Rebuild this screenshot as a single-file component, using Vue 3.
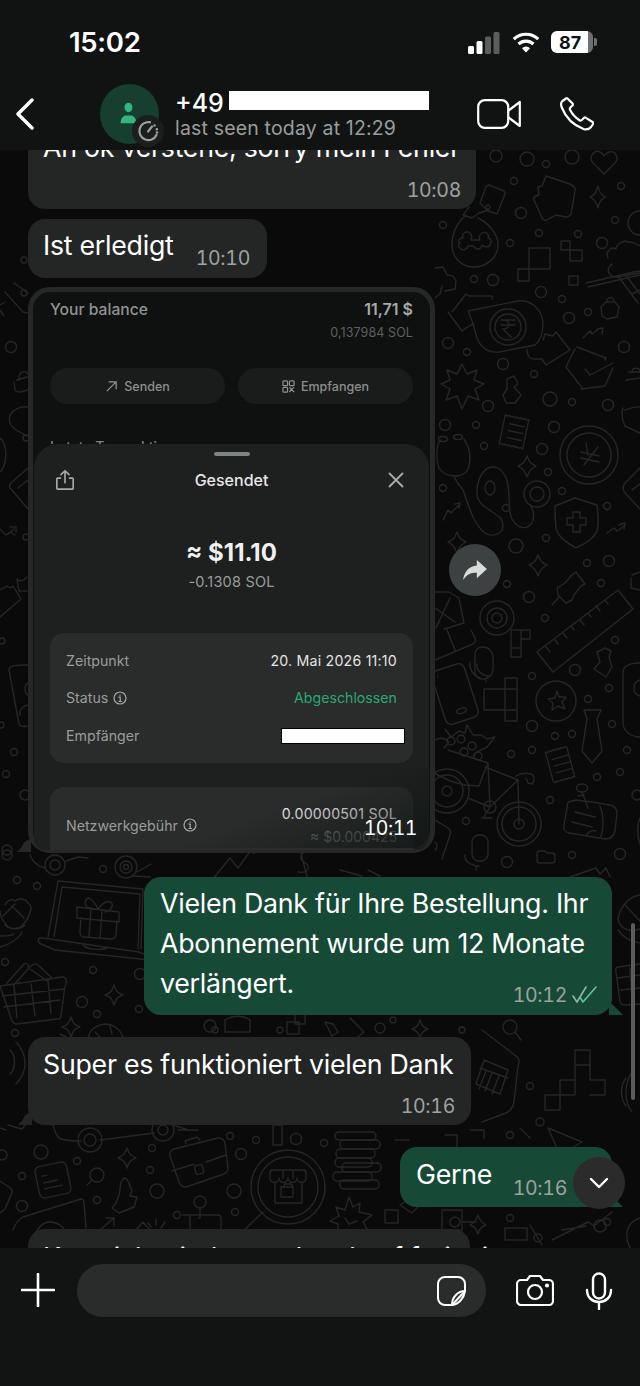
<template>
  <div class="phone">
    <header class="topbar">
      <div class="status">
        <span class="clock">15:02</span>
        <div class="status-icons">
          <svg class="signal" viewBox="0 0 32 22"><rect x="0" y="14" width="6" height="8" rx="1.5" fill="#fff"/><rect x="8.5" y="9" width="6" height="13" rx="1.5" fill="#fff"/><rect x="17" y="4.500" width="6" height="17.500" rx="1.500" fill="#5b5d5d"/><rect x="25.500" y="0" width="6" height="22" rx="1.500" fill="#5b5d5d"/></svg>
          <svg class="wifi" viewBox="0 0 28 21" fill="none" stroke="#fff" stroke-width="3.200"><path d="M1.800 7.200a17.500 17.500 0 0 1 24.400 0"/><path d="M6.500 12a11 11 0 0 1 15 0"/><path d="M14 20.500l-4-4.300a5.600 5.600 0 0 1 8 0z" fill="#fff" stroke="none"/></svg>
          <div class="battery"><span>87</span><i></i></div>
        </div>
      </div>
      <div class="contact">
        <svg class="back" viewBox="0 0 22 32" fill="none" stroke="#fff" stroke-width="3.400" stroke-linecap="round" stroke-linejoin="round"><path d="M18 2L4 16l14 14"/></svg>
        <div class="avatar">
          <svg viewBox="0 0 24 30" fill="#36b37e"><ellipse cx="12" cy="8" rx="5" ry="6"/><path d="M2 28c0-6 3-9 6-10h8c3 1 6 4 6 10z"/></svg>
          <span class="timer">
            <svg viewBox="0 0 24 24" fill="none" stroke="#9aa09e" stroke-width="2.200" stroke-linecap="round"><path d="M14 3.200A9 9 0 1 0 20.500 16"/><path d="M12 12.500l4-5"/><path d="M18.500 6.500h.01M20.800 10.200h.01M21 13.500h.01" stroke-width="2.600"/></svg>
          </span>
        </div>
        <div class="who">
          <div class="name">+49<span class="redact"></span></div>
          <div class="seen">last seen today at 12:29</div>
        </div>
        <svg class="video" viewBox="0 0 44 30" fill="none" stroke="#fff" stroke-width="2.200" stroke-linejoin="round"><rect x="1.200" y="1.200" width="30" height="27.600" rx="6.500"/><path d="M31.500 11.500L42.800 3v24l-11.300-8.500"/></svg>
        <svg class="call" viewBox="0 0 34 34" fill="none" stroke="#fff" stroke-width="2.200" stroke-linejoin="round"><path d="M6 1.500L2.500 4C.8 5.500.8 8 1.800 10.500 5.500 20 13 28 23.500 32c2.500.8 5.500.5 7.500-2l2-3c.4-.8.2-1.500-.5-2l-6.500-4.200c-.8-.5-1.500-.4-2.200.2l-2 2c-.7.6-1.500.7-2.300.2-3.500-2.200-7.500-6.500-9.500-10.500-.4-.8-.2-1.500.4-2.200l2-2c.5-.6.6-1.300.2-2L8 2c-.5-.8-1.300-1-2-.5z"/></svg>
      </div>
    </header>

    <main class="chat">
      <!-- wallpaper coordinates are page coordinates -->
      <svg class="wallpaper" viewBox="0 150 640 1098" fill="none" stroke="#262626" stroke-width="1.400" stroke-linejoin="round" stroke-linecap="round">
        <circle v-for="(d, i) in dots" :key="i" :cx="d[0]" :cy="d[1]" :r="d[2]"/>

        <!-- top right -->
        <path d="M604 174l-11-11c-5-6 1-14 7-11 2 1 3 2 4 4 1-2 3-3 5-4 6-2 11 6 6 11z"/>
        <path d="M546 176l24 8c4 2 6 4 5 7l-4 23c-1 2-3 3-5 3l-10-2-9 5c-2 1-4 0-5-2l-8-18c-1-2 0-3 2-4l3-1-1-8 4-1z"/>
        <path d="M598 186c1 6 3 9 7 11-4 3-6 5-7 11-2-6-3-8-8-11 5-2 6-5 8-11z"/>
        <path d="M489 185l15 6c1 1 1 2 1 3l-8 20-9-3-8-8 6-16c1-2 2-2 3-2z"/>
        <path d="M469 207l-6 8 9 3 7-5 10-3M488 205a2 2 0 1 0 .1 0"/>
        <path d="M466 215c-8 7-14 17-14 30 0 13 10 22 22 22s24-9 24-22c0-12-10-22-20-27"/>
        <path d="M463 238c-2-5 4-8 7-5 2 2 2 5 1 7h9c-1-2-1-5 2-7 4-2 8 2 6 5 3 0 4 5 2 7-2 3-6 2-8 0-1 2-1 4-3 4-2 1-4-1-6-3h-5c-1 3-4 5-7 3-3-1-3-5-1-6-3-1-1-5 3-5z"/>
        <path d="M529 248h21v21h-21zM518 269h11v12h-11zM561 241h9v9h-9zM570 250h12v11h-12zM569 276h9v9h-9z"/>
        <path d="M608 258c-3-6 3-12 8-9 1-6 8-9 12-7 4-1 8 2 12 4M612 264c-4 2-5 8-2 10 1 2 4 3 7 3l23-4"/>
        <path d="M586 283l48-11 6-1M588 287l52-12M618 276l20 27M625 274l15 20M640 290l-8 4"/>
        <circle cx="640" cy="223" r="12"/>
        <path d="M606 302h9l4 5-2 10-10 2-5-3-1-9zM607 302c-1-6 8-6 7 0"/>
        <path d="M583 338l7-7 2 3 8-6M597 329l6-1-1 6"/>
        <path d="M577 347l29 11c0 0-1 2-1 2M566 367c2-5 6-12 9-18M566 367l17 22M581 389l24-3 8-18M585 369l5 6 23-12"/>
        <!-- rupee note with arrows -->
        <path d="M452 312l14-18 3 2 22 0c2 0 2 2 1 3M466 328l-4 3-14-19M466 328l5-3 3-1"/>
        <path d="M468 311l50-10c12-2 24 8 25 22 0 10-2 17-8 22l-36 7c-10 1-18-4-22-14-2-8-4-16-9-27z"/>
        <circle cx="508" cy="327" r="18"/><circle cx="508" cy="327" r="13"/>
        <path d="M501 320h14M501 325h14M503 320c8 0 8 9 0 9l8 8"/>
        <path d="M527 349c0 7 2 10 7 10l8 0 4 6 24-15-14-18-3 4-8-2-2 6"/>
        <path d="M462 364l5 10 10-4-3 10 10 4-9 5 4 11-11-4-6 13-5-13-11 4 4-11-9-5 9-4-3-10 10 4z"/>
        <path d="M507 379l7-3 4 8-4 3 7 8-6 8h-9l-3-8 4-6z"/>
        <path d="M628 372h12M626 380l14-2M632 372c0-5 8-5 8 0"/>
        <path d="M435 268l8-1 4 8 6 1 3 5-1 8-10 2M435 298l5-4 2-8"/>

        <!-- middle right -->
        <g transform="rotate(12 515 432)"><path d="M502 417l2 1 2-1 2 1 2-1 2 1 2-1 2 1 2-1 2 1 2-1 2 1 2-1v30l-2-1-2 1-2-1-2 1-2-1-2 1-2-1-2 1-2-1-2 1-2-1-2 1zM508 425h15M508 432h15M508 439h15"/></g>
        <circle cx="589" cy="455" r="29"/><circle cx="589" cy="455" r="22"/>
        <path d="M586 443l2 12M598 447l-14 18M581 452l18 4M581 458l18 4"/>
        <path d="M527 456c2 6 4 8 9 10-5 3-7 5-9 11-2-6-4-8-9-11 5-2 7-4 9-10z"/>
        <path d="M538 555c2 6 4 8 9 10-5 3-7 5-9 11-2-6-4-8-9-11 5-2 7-4 9-10z"/>
        <path d="M457 532c2 6 4 8 9 10-5 3-7 5-9 11-2-6-4-8-9-11 5-2 7-4 9-10z"/>
        <path d="M441 440l-3 4c-2 10-1 18 1 24 2 4 8 8 16 8s13-4 14-10c2-8 1-18-5-27"/>
        <ellipse cx="443" cy="439" rx="4.500" ry="2.500"/><ellipse cx="458" cy="437" rx="4.500" ry="2.500"/>
        <path d="M454 476c2 6 6 10 9 14 6 16 10 34 22 43 6 4 14 2 17-3 2-6 0-11-4-14-10-8-22-12-21-24 0-12 6-25 16-25 8 0 13 8 15 18 2 12 0 26 4 34 4 7 10 10 15 8 7-3 9-14 3-22"/>
        <ellipse cx="490" cy="488" rx="5" ry="7"/>
        <circle cx="537" cy="494" r="13"/><circle cx="537" cy="494" r="7"/>
        <path d="M555 506l20-8 22 7c1 8 2 20 0 26-3 8-12 13-21 17-10-6-18-11-20-20-1-8-1-14-1-22z"/>
        <path d="M573 512h7v6h6v7h-6v7h-7v-7h-6v-7h6z"/>
        <path d="M443 520l5-10 3 3 8-8M455 504l5-1-1 5"/>
        <path d="M607 533l7-5 3 3 7-5M619 525l6-2-1 6"/>
        <path d="M572 575l4-3 9 12-4 2-7 9-2 5-6 3-8-8-1-7 8-5zM552 605l7-8"/>
        <path d="M623 408c-2 6-1 12 2 18l15 7M640 407c-6-1-11 2-15 3"/>
        <path d="M640 468l-14 14c-4 4-4 8 0 12l14 15M640 484l-8 6"/>
        <path d="M632 575l8-3M631 588l9 2M631 578v10"/>
        <path d="M435 592h14l10 6 5 25-20 6M435 608l20 14M450 598l-14 30"/>
        <!-- ruler, target -->
        <path d="M618 590l15 19-80 63-16-20zM546 647l4 5M555 640l3 4M563 633l4 5M571 626l3 4M580 620l4 5M588 613l3 4M596 606l4 5M605 600l3 4"/>
        <circle cx="497" cy="618" r="17"/><circle cx="497" cy="618" r="10"/><circle cx="497" cy="618" r="5"/>
        <path d="M511 630h19v9h-9v9h-10zM521 630v9M511 648v9h10v-9"/>
        <path d="M482 647h1a10 10 0 0 1 10 10v12a10 10 0 0 1-10 10h-1a7 7 0 0 1-7-7v-18a7 7 0 0 1 7-7zM477 664c-1 6 5 12 12 12M486 678v4M470 662c-1 8 4 14 10 16"/>
        <g transform="rotate(-18 455 694)"><rect x="438" y="666" width="34" height="56" rx="6"/><ellipse cx="456" cy="712" rx="5" ry="2.500"/><path d="M444 672h.1"/></g>
        <path d="M435 660l38-16c3-2 3-5 1-8l-3-6M447 630l8 20"/>
        <path d="M505 678h12v11h-12zM484 689h33v21h-33zM505 689v21M505 710h12v11h-12z"/>
        <circle cx="556" cy="701" r="20"/>
        <path d="M557 691l2 6 7 0-4 5 3 7-7-3-6 4 1-7-5-4 7-1z"/>
        <path d="M584 710h17l-4 9 5 32-10 12-10-12 5-32z"/>
        <g transform="rotate(-15 562 764)"><path d="M549 748l2 1 2-1 2 1 2-1 2 1 2-1 2 1 2-1 2 1 2-1 2 1v31l-2-1-2 1-2-1-2 1-2-1-2 1-2-1-2 1-2-1-2 1-2-1zM554 757h16M554 764h16M554 771h16"/></g>
        <path d="M597 652l8-4 6 3-2 6 3 10-6 10-12-8 6-7z"/>
        <path d="M640 663c-10 0-17 3-17 10v50c0 8 8 14 17 14M640 680c-8 2-8 14 0 16"/>
        <!-- bike -->
        <path d="M445 729l6 8 8-6 6 2 2-8 6 10 8 0 6 4 8-2-8 10-10 5-4 4M435 740c5-3 10-2 14 2l-5 6"/>
        <path d="M451 737a4 4 0 1 0 .1 0M461 735a4 4 0 1 0 .1 0M472 742a4 4 0 1 0 .1 0M464 748a4 4 0 1 0 .1 0M478 752a4 4 0 1 0 .1 0"/>
        <path d="M448 750l40 13-5 12-4 11-14-1-15-4-16-8"/>
        <circle cx="447" cy="791" r="22"/><circle cx="447" cy="791" r="16"/><circle cx="447" cy="791" r="5"/>
        <circle cx="519" cy="824" r="22"/><circle cx="519" cy="824" r="17"/><circle cx="519" cy="824" r="5"/>
        <path d="M468 798l22 9 28-27-33-13M519 824l-1-44 -2 0M488 764l2 43M490 807l-6 10M482 818h10"/>
        <circle cx="490" cy="807" r="6"/>
        <path d="M516 776c6-4 14-3 17-1 2 3 1 7-1 9l-4-1-2-5"/>
        <path d="M568 802l8-2 16 2 18 3c4 1 7 4 7 8l-2 18c-1 5-5 8-10 8l-36-6c-4-1-6-4-5-8z"/>
        <path d="M575 812l20 5M572 822l20 5M600 806c4 10 4 24 0 32M586 836c2-4 6-6 10-5"/>
        <ellipse cx="582" cy="788" rx="5.500" ry="4"/><path d="M582 792l6 16M578 796l6-1"/>
        <path d="M479 835h2a7 7 0 0 1 7 7v12a7 7 0 0 1-7 7h-2a7 7 0 0 1-7-7v-12a7 7 0 0 1 7-7zM465 855c-1 6 6 11 14 11M476 866v4"/>
        <path d="M540 851h5l2 2h5a3 3 0 0 1 3 3v4a3 3 0 0 1-3 3h-12a3 3 0 0 1-3-3v-6a3 3 0 0 1 3-3z"/>
        <path d="M570 877l26-9 4 6 6-6 4 9"/>
        <path d="M435 820l13 8a6 6 0 0 1 2 7l-8 24M435 842a5 5 0 0 1 0 8"/>
        <path d="M640 818c-3 6-3 18 0 26"/>
        <!-- under the picture -->
        <path d="M212 880l18-22 8 10 16-22M246 846l8 0 0 8"/>
        <path d="M300 850l8 30M310 852c-8-2-12 6-6 10 8 4 4 12-6 10"/>
        <path d="M340 870l22 6M368 870l12 6"/>
        <circle cx="55" cy="865" r="10"/><circle cx="55" cy="865" r="5"/>
        <path d="M30 855c2 6 8 12 15 13M66 861l12-4 10 1"/>
        <circle cx="126" cy="867" r="11"/><circle cx="126" cy="867" r="6"/><circle cx="126" cy="867" r="2.500"/>
        <path d="M133 876l17 1M137 872l14-8"/>
        <!-- laptop and gift -->
        <path d="M48 937l10-56 85 8M143 889l-2 60"/>
        <path d="M54 937l8-50 78 7-2 55"/>
        <path d="M43 938l96 14c2 1 4 2 6 2l5 1v5l-95-10-14-6c-4-2-3-6 0-6zM83 945c3 4 17 6 24 3"/>
        <path d="M77 907l42 5v10l-42-4zM81 918l-1 14c0 3 2 5 4 5l28 2c2 0 4-2 4-4l1-14M91 909l-2 27M102 911l-2 27"/>
        <path d="M91 908c-7 0-7-8-3-10 3 0 8 6 10 11 3-4 8-9 13-7 3 3 0 9-6 10"/>
        <path d="M5 905c2-4 6-7 10-4 3-3 10-3 13 2 3 2 4 6 2 9l-2 6-6 8c-5 4-14 3-16-2-4-4-6-9-6-13M5 925c5 5 15 5 20 0M12 906l12 12M3 916l12-12M22 932c-3 6-12 13-22 15M0 936c6 0 12 0 14-2"/>
        <path d="M0 986l62-9c4-1 6 6 3 9l-4 30c0 2-2 3-4 3l-40 5c-3 0-4-1-5-3zM2 996l62-7M4 1007l56-7M14 986l3 32M31 984l4 32M48 981l3 32"/>
        <path d="M7 983l17-19c3-2 6 2 4 5l-15 17M30 967c3-3 6-4 8-2l14 13-5 3-17-12"/>
        <path d="M114 985c2 6 3 8 9 10-6 2-7 4-9 10-2-6-3-8-9-10 6-2 7-4 9-10z"/>
        <path d="M71 1017c2 6 3 8 9 10-6 2-7 4-9 10-2-6-3-8-9-10 6-2 7-4 9-10z"/>
        <path d="M89 1040c-2-10 8-15 16-16 8 0 18 6 18 16M95 1032l6 6M110 1026l2 8"/>
        <path d="M640 895c-12 2-20 12-22 24 2 8 8 14 22 10M625 905l15 16M618 930c4 6 12 12 22 13"/>
        <path d="M640 964l-22 3c-2 0-3 3-2 5l4 30c1 2 2 3 4 3l16-1M618 978l22-3M620 990l20-2M630 968l2 32"/>

        <!-- between the bubbles -->
        <path d="M225 1020c8-5 18-5 25 0v12h-25zM287 1022h12v12h-12zM295 1014h10v10h-10z"/>
        <path d="M60 1034l6 3M325 1022l8 2 5 8-6 4zM350 1018l14 14-6 5"/>
        <path d="M420 1020c2 6 3 7 8 9-5 2-6 3-8 9-2-6-3-7-8-9 5-2 6-3 8-9z"/>
        <path d="M510 1020a7 7 0 1 1 0 14 7 7 0 0 1 0-14zM515 1032l6 8"/>
        <path d="M482 1030l34 26c4 3 4 6 2 10l-4 36c-1 5-3 9-8 11l-24 9"/>
        <path d="M484 1060l24 10-8 24-24-10zM480 1068l28 10M486 1071l-7 18M492 1073l-7 18M499 1076l-7 18"/>
        <path d="M560 1095h15v-15h-15zM575 1080v-15h15v15h15v15h-15M590 1065v-15h-15v15M545 1095h15v15h-15z"/>
        <path d="M548 1128l34 14-14 8-4 14z"/>
        <path d="M626 1078c-6 8-6 20 0 28M632 1072c-8 12-8 30 0 40"/>
        <path d="M10 1050c6 6 6 18 0 24M16 1042c12 12 12 30 0 42"/>

        <!-- bottom left -->
        <path d="M53 1125c2 6 3 12 8 14 6 2 14 2 20 2M100 1140l54-7M172 1125l14 4M178 1130h20"/>
        <circle cx="90" cy="1140" r="12"/><circle cx="90" cy="1140" r="6"/>
        <circle cx="163" cy="1130" r="11"/><circle cx="163" cy="1130" r="5"/>
        <path d="M8 1125l14 4 3-4M0 1128l6 2"/>
        <g transform="rotate(-12 53 1180)"><rect x="37" y="1164" width="32" height="32" rx="5"/><path d="M43 1174h5M43 1181h14M43 1187h18"/></g>
        <circle cx="97" cy="1175" r="7"/><path d="M92 1180l-5 5"/>
        <path d="M127 1148c2 6 3 7 9 10-6 2-7 4-9 10-2-6-3-8-9-10 6-3 7-4 9-10z"/>
        <path d="M120 1190c0-6 2-10 4-12 3 0 5 4 6 9l2 3-2 6 7 1-3 10-15 6-7-5 4-5 3-8z"/>
        <path d="M174 1149l44-11c4 0 6 2 7 5l3 25c0 3-2 5-4 6l-38 13c-4 0-6-2-7-5l-9-26c-1-3 1-6 4-7zM172 1171l22-7M206 1162l20-7"/>
        <rect x="195" y="1165" width="8" height="9" rx="2" transform="rotate(-14 199 1169)"/>
        <path d="M186 1144l-1-3 12-4 3 3"/>
        <circle cx="288" cy="1187" r="37"/><circle cx="288" cy="1187" r="30"/>
        <path d="M270 1178v-5a3 3 0 0 1 3-3h30a3 3 0 0 1 3 3v5a4 4 0 0 1-9 0 4 4 0 0 1-9 0 4 4 0 0 1-9 0 4 4 0 0 1-9 0zM283 1170v8M293 1170v8M275 1182v21h27v-21M281 1187h12v10h-12zM283 1187l2-3h6l2 3"/>
        <path d="M263 1212l-21 20"/>
        <rect x="273" y="1125" width="9" height="20"/>
        <rect x="335" y="1132" width="41" height="8" rx="4"/><rect x="340" y="1140" width="40" height="9" rx="4"/>
        <rect x="336" y="1149" width="39" height="9" rx="4"/><rect x="335" y="1158" width="37" height="9" rx="4"/>
        <rect x="342" y="1163" width="39" height="9" rx="4"/><rect x="333" y="1172" width="39" height="9" rx="4"/><rect x="340" y="1180" width="39" height="9" rx="4"/>
        <path d="M349 1197l4 10 7-4-1 9 13 3-9 7 5 9-7 0-9 5-5-5-9-1 0-6-8-3 9-5-3-9 9 3z"/>
        <path d="M345 1218l4 6 8-3"/>
        <path d="M0 1181l9 6c3 2 4 5 2 8l-6 14-5 4"/>
        <path d="M13 1230c2-6 5-10 10-13l58-18c2 0 3 2 3 4l2 25M35 1236c2-8 8-14 15-14s14 4 16 12"/>
        <path d="M200 1208v10h-1M183 1215h35c2 0 3 2 3 4v10M190 1216v13"/>
        <path d="M100 1230l14-12M106 1218l8 0 0 8M133 1233l10-11 7 8"/>
        <path d="M156 1219v6M165 1222l-4 6M148 1223l3 4"/>
        <path d="M385 1210h13v13h-13z"/>

        <!-- bottom right -->
        <path d="M400 1205l12-8 8 8-8 8zM388 1240l8-8 8 8"/>
        <path d="M478 1215c2 6 3 7 8 10-5 2-6 3-8 9-2-6-3-7-8-9 5-3 6-4 8-10z"/>
        <path d="M552 1240l36-18 6 4 18-14M594 1226a6 6 0 1 0 0-.1M562 1230l24-4"/>
        <path d="M442 1210h20v20h-20zM462 1222h14"/>
        <path d="M505 1228h22v12h-22zM530 1225l12 20"/>
        <path d="M640 1218c-14 4-16 18-10 30"/>
        <path d="M445 1135h12v12M470 1130h14v8M395 1140h14M520 1128l10 10"/>

        <!-- strip left of the picture -->
        <path d="M5 292l18 20 8 2M14 283l14 10M0 305l5-3M0 310l4 6"/>
        <path d="M17 380l10-3M14 382l1 8c1 2 3 2 5 2l8-2M19 380c-1-10 9-11 10-3"/>
        <path d="M28 407c-8-1-14 2-18 8-2 6 0 11 6 15l11 6"/>
        <path d="M0 438c5 4 7 14 5 24-1 5-3 8-5 10"/>
        <path d="M28 468l-17 15c-2 3-2 4 0 6l17 20M28 480l-10 8"/>
        <path d="M0 529l6 6 4-3 5 3M8 534l6-5M10 527l6 0 0 5"/>
        <path d="M27 577c-3 4-8 5-10 2l2 12h8M0 590l7-4c2 2 5 2 6 0l8 13-21 18"/>
        <path d="M28 665c-10 0-19 0-19 5l10 54c1 2 4 3 8 2M28 683c-4 2-4 10 0 12M28 705c-6 1-9 6-8 10"/>
      </svg>

      <div class="messages">
        <div class="bubble in first">
          <p>Ah ok verstehe, sorry mein Fehler</p>
          <span class="time">10:08</span>
        </div>
        <div class="bubble in short">
          <p>Ist erledigt</p>
          <span class="time">10:10</span>
        </div>

        <div class="photo-row">
          <div class="photo tail-in">
            <div class="wallet">
              <div class="balance">
                <span>Your balance</span>
                <b>11,71 $</b>
              </div>
              <div class="balance-sol">0,137984 SOL</div>
              <div class="actions">
                <span class="action">
                  <svg viewBox="0 0 14 14" fill="none" stroke="#8f9492" stroke-width="1.400"><path d="M2 12L12 2M4 2h8v8"/></svg>
                  Senden
                </span>
                <span class="action">
                  <svg viewBox="0 0 14 14" fill="none" stroke="#8f9492" stroke-width="1.300"><rect x="1" y="1" width="5" height="5" rx="1"/><rect x="8" y="1" width="5" height="5" rx="1"/><rect x="1" y="8" width="5" height="5" rx="1"/><path d="M8 8l2 2 3-2M8 13l2-3 3 3"/></svg>
                  Empfangen
                </span>
              </div>
              <div class="latest">Letzte Transaktionen ›</div>
            </div>
            <div class="sheet">
              <span class="handle"></span>
              <div class="sheet-head">
                <svg viewBox="0 0 22 24" fill="none" stroke="#a7abaa" stroke-width="1.800" stroke-linecap="round" stroke-linejoin="round"><path d="M6 10H3a1 1 0 0 0-1 1v10a1 1 0 0 0 1 1h16a1 1 0 0 0 1-1V11a1 1 0 0 0-1-1h-3"/><path d="M11 15V2M6.500 6L11 1.800 15.500 6"/></svg>
                <span>Gesendet</span>
                <svg viewBox="0 0 16 16" fill="none" stroke="#a7abaa" stroke-width="1.900" stroke-linecap="round"><path d="M1.500 1.500l13 13M14.500 1.500l-13 13"/></svg>
              </div>
              <div class="amount">≈ $11.10</div>
              <div class="amount-sol">-0.1308 SOL</div>
              <div class="panel">
                <div class="row"><span>Zeitpunkt</span><b>20. Mai 2026 11:10</b></div>
                <div class="row">
                  <span class="with-info">Status
                    <svg viewBox="0 0 14 14" fill="none" stroke="#a3a7a5" stroke-width="1.200"><circle cx="7" cy="7" r="6"/><path d="M5.500 6.200H7.200V10.500M5.500 10.500h3.500M7 3.500v1.200"/></svg>
                  </span>
                  <b class="done">Abgeschlossen</b>
                </div>
                <div class="row"><span>Empfänger</span><i class="blank"></i></div>
              </div>
              <div class="panel fee">
                <div class="row">
                  <span class="with-info">Netzwerkgebühr
                    <svg viewBox="0 0 14 14" fill="none" stroke="#a3a7a5" stroke-width="1.200"><circle cx="7" cy="7" r="6"/><path d="M5.500 6.200H7.200V10.500M5.500 10.500h3.500M7 3.500v1.200"/></svg>
                  </span>
                  <div class="fee-val"><b>0.00000501 SOL</b><em>≈ $0.000425</em></div>
                </div>
              </div>
            </div>
            <div class="shade"></div>
            <span class="photo-time">10:11</span>
          </div>
          <span class="forward">
            <svg viewBox="0 0 28 24" fill="#d9dcdb"><path d="M16 1l11 10-11 10v-6C9 15 5 17 1 23c1-9 6-15 15-16z"/></svg>
          </span>
        </div>

        <div class="bubble out long tail-out">
          <p>Vielen Dank für Ihre Bestellung. Ihr Abonnement wurde um 12 Monate verlängert.</p>
          <span class="time sent">10:12
            <svg viewBox="0 0 26 18" fill="none" stroke="#8fb8a6" stroke-width="1.600" stroke-linecap="round" stroke-linejoin="round"><path d="M1 10l4 6L14 1"/><path d="M8.500 12l2.500 4L24 1" stroke="#62c69c"/></svg>
          </span>
        </div>
        <div class="bubble in wide tail-in">
          <p>Super es funktioniert vielen Dank</p>
          <span class="time">10:16</span>
        </div>
        <div class="bubble out thanks tail-out">
          <p>Gerne</p>
          <span class="time">10:16</span>
        </div>
        <div class="bubble in last">
          <p>Kann ich wieder nochmal auf freigeist</p>
        </div>
      </div>

      <span class="scrollbar"></span>
      <span class="jump">
        <svg viewBox="0 0 20 12" fill="none" stroke="#fff" stroke-width="2.400" stroke-linecap="round" stroke-linejoin="round"><path d="M2 2l8 8 8-8"/></svg>
      </span>
    </main>

    <footer class="composer">
      <svg class="plus" viewBox="0 0 34 34" stroke="#fff" stroke-width="2.600" stroke-linecap="round"><path d="M17 1v32M1 17h32"/></svg>
      <div class="input">
        <svg viewBox="0 0 30 32" fill="none" stroke="#fff" stroke-width="2" stroke-linejoin="round"><path d="M29 16V9a7 7 0 0 0-7-7H9a7 7 0 0 0-7 7v14a7 7 0 0 0 7 7h7z"/><path d="M29 16c-7 0-13 6-13 14 7-1 12-7 13-14z"/></svg>
      </div>
      <svg class="camera" viewBox="0 0 38 32" fill="none" stroke="#fff" stroke-width="2.200" stroke-linejoin="round"><path d="M5 6h6l3-4h10l3 4h6a4 4 0 0 1 4 4v17a4 4 0 0 1-4 4H5a4 4 0 0 1-4-4V10a4 4 0 0 1 4-4z"/><circle cx="19" cy="18" r="7"/><circle cx="31" cy="11.500" r="1" fill="#fff"/></svg>
      <svg class="mic" viewBox="0 0 28 38" fill="none" stroke="#fff" stroke-width="2.400" stroke-linecap="round"><rect x="8" y="1.500" width="12" height="25" rx="6"/><path d="M2 18c0 16 24 16 24 0M14 30v7"/></svg>
    </footer>
  </div>
</template>

<script setup>
// small circles of the chat wallpaper: x, y, r
const dots = [
  [496, 156, 6], [527, 159, 7], [546, 164, 3.5], [572, 157, 7], [514, 181, 3.5], [621, 186, 3.5], [521, 213, 5.5],
  [615, 220, 3.5], [443, 225, 3.5], [539, 233, 3.5], [578, 234, 3.5], [510, 243, 3.5], [602, 243, 5.5], [474, 279, 3.5],
  [493, 280, 5.5], [541, 292, 5.5], [562, 299, 3.5], [569, 318, 5.5], [588, 312, 3.5], [448, 343, 5.5], [467, 352, 3.5],
  [503, 364, 5.5], [534, 374, 3.5], [624, 347, 5.5], [488, 406, 5.5], [550, 399, 7], [572, 402, 3.5], [608, 405, 5.5],
  [445, 425, 5.5], [476, 425, 3.5], [554, 427, 5.5], [484, 446, 3.5], [542, 449, 5.5], [548, 472, 3.5], [443, 488, 3.5],
  [562, 491, 3.5], [607, 506, 3.5], [506, 508, 3.5], [546, 538, 3.5], [516, 546, 7], [609, 561, 5.5], [587, 563, 3.5],
  [601, 583, 3.5], [507, 584, 3.5], [529, 597, 5.5], [545, 618, 3.5], [575, 670, 5.5], [615, 640, 3.5], [532, 676, 3.5],
  [609, 688, 3.5], [588, 699, 3.5], [532, 726, 5.5], [612, 724, 3.5], [555, 736, 3.5], [572, 734, 3.5], [511, 754, 3.5],
  [532, 750, 3.5], [627, 750, 3.5], [620, 772, 3.5], [597, 777, 3.5], [550, 800, 3.5], [466, 821, 3.5], [507, 862, 5.5],
  [572, 855, 3.5], [620, 854, 5.5], [637, 795, 5],
  [7, 855, 5], [17, 880, 3.5], [37, 886, 3.5], [103, 869, 3.5], [5, 962, 3.5], [93, 970, 3.5], [82, 1002, 5.5], [97, 1014, 3.5],
  [139, 1009, 3.5], [15, 1033, 3.5], [140, 974, 5.5], [210, 1026, 6], [215, 1030, 3], [280, 1030, 3], [380, 1028, 5], [393, 1020, 3], [462, 1030, 3],
  [530, 1086, 3.5], [540, 1122, 4], [510, 1135, 3.5], [41, 1152, 7], [2, 1155, 5], [22, 1176, 3.5], [77, 1161, 3.5], [152, 1148, 3.5],
  [150, 1170, 3.5], [230, 1136, 3.5], [256, 1140, 3.5], [296, 1139, 5.5], [324, 1143, 3.5], [241, 1154, 5.5], [157, 1191, 7], [234, 1191, 7],
  [97, 1200, 3.5], [22, 1206, 5.5], [235, 1212, 3.5], [200, 1202, 6], [177, 1215, 3.5],
  [430, 1185, 3.5], [607, 1222, 3.5], [510, 1218, 3.5], [538, 1238, 4], [455, 1222, 5],
  [11, 347, 5.5], [24, 293, 3], [26, 438, 3], [26, 537, 3], [2, 641, 3], [1, 725, 3], [14, 752, 3.5], [6, 774, 3.5], [25, 795, 5], [7, 850, 5], [24, 260, 3]
]
</script>

<style>
html, body { margin: 0; background: #0a0a0a; }
</style>

<style scoped>
.phone {
  width: 640px; height: 1386px; display: flex; flex-direction: column; overflow: hidden;
  background: #0a0a0a; color: #fff; font-family: Inter, "Liberation Sans", sans-serif;
}

.topbar { height: 150px; flex: none; background: #111313; position: relative; z-index: 2; }
.status { height: 78px; display: flex; justify-content: space-between; align-items: center; padding: 6px 47px 0 69px; box-sizing: border-box; }
.clock { font-size: 27.500px; font-weight: 600; letter-spacing: -.3px; color: #fff; }
.status-icons { display: flex; align-items: center; }
.signal { width: 32px; height: 22px; margin-top: 2px; }
.wifi { width: 28px; height: 21px; margin-left: 12px; }
.battery {
  width: 42px; height: 22px; margin-left: 11px; border-radius: 6px; position: relative;
  background: linear-gradient(90deg, #fff 87%, #6d7070 87%);
  color: #111; font-size: 18px; font-weight: 700; display: flex; align-items: center; padding-left: 8px; box-sizing: border-box;
}
.battery i { position: absolute; right: -4px; top: 7px; width: 3px; height: 8px; border-radius: 0 2px 2px 0; background: #6d7070; }
.contact { display: flex; align-items: center; height: 72px; position: relative; }
.back { width: 22px; height: 32px; margin-left: 14px; flex: none; }
.avatar {
  width: 59px; height: 60px; border-radius: 50%; background: #163f30; margin-left: 64px; flex: none; position: relative;
  display: flex; align-items: center; justify-content: center;
}
.avatar > svg { width: 19px; height: 24px; margin-left: -2px; margin-top: -2px; }
.timer {
  position: absolute; right: -5px; bottom: -3px; width: 32px; height: 32px; border-radius: 50%; background: #1c1e1e;
  display: flex; align-items: center; justify-content: center;
}
.timer svg { width: 24px; height: 24px; }
.who { margin-left: 16px; width: 301px; flex: none; }
.name { display: flex; align-items: center; font-size: 25px; font-weight: 500; line-height: 30px; height: 30px; }
.redact { width: 200px; height: 19px; background: #fff; margin-left: 5px; margin-top: -6px; }
.seen { font-size: 19.500px; line-height: 24px; margin-top: -2px; color: #999e9c; letter-spacing: .17px; }
.video { width: 44px; height: 30px; margin-left: 1px; flex: none; }
.call { width: 34px; height: 34px; margin-left: 39px; flex: none; }

.chat { flex: 1; position: relative; overflow: hidden; min-height: 0; }
.wallpaper { position: absolute; inset: 0; width: 640px; height: 1098px; }
.messages { position: relative; display: flex; flex-direction: column; align-items: flex-start; padding: 0 28px; }

.bubble { position: relative; box-sizing: border-box; border-radius: 17px; flex: none; display: flex; }
.bubble p { margin: 0; font-size: 26.750px; line-height: 40px; letter-spacing: -.27px; color: #fff; font-weight: 400; }
.in { background: #242626; }
.out { background: #164a36; align-self: flex-end; }
.time { flex: none; font-size: 19.500px; line-height: 24px; color: #9ea2a0; letter-spacing: -.3px; white-space: nowrap; font-variant-numeric: tabular-nums; }

.first { width: 448px; height: 90px; margin-top: -31px; flex-direction: column; padding: 0 15px; justify-content: flex-end; }
.first p { line-height: 32px; margin-bottom: 15px; white-space: nowrap; }
.first .time { align-self: flex-end; margin-bottom: 7px; }
.short { width: 239px; height: 59px; margin-top: 10px; padding: 6px 15px; justify-content: space-between; }
.short .time { margin-top: 21px; margin-right: 2px; }

.photo-row { display: flex; align-items: center; margin-top: 9px; flex: none; }
.photo {
  width: 407px; height: 566px; box-sizing: border-box; border: 5px solid #262828; border-radius: 22px; background: #0f1010;
  position: relative; display: flex; flex-direction: column;
}
.wallet { height: 152px; flex: none; overflow: hidden; padding: 0 17px; }
.balance { display: flex; justify-content: space-between; align-items: center; height: 20px; margin-top: 7px; font-size: 15.700px; font-weight: 500; color: #8f9492; }
.balance b { font-size: 16px; font-weight: 600; color: #a7aaa8; }
.balance-sol { text-align: right; font-size: 12.500px; color: #5d605f; margin-top: 5px; line-height: 18px; letter-spacing: .1px; }
.actions { display: grid; grid-template-columns: 175px 175px; gap: 13px; margin-top: 26px; }
.action {
  height: 36px; border-radius: 18px; background: #1a1b1b; display: flex; align-items: center; justify-content: center; gap: 6px;
  font-size: 12.500px; font-weight: 500; color: #8b8f8d;
}
.action svg { width: 13px; height: 13px; }
.latest { margin-top: 34px; font-size: 14px; font-weight: 500; color: #7d8180; white-space: nowrap; }

.sheet {
  flex: 1; min-height: 0; overflow: hidden; margin: 0 1px -2px; border-radius: 24px 24px 12px 12px; background: #1e1f1f;
  display: flex; flex-direction: column; align-items: center; padding: 0 16px; position: relative;
}
.handle { width: 36px; height: 4px; border-radius: 2px; background: #7d8583; margin-top: 8px; flex: none; }
.sheet-head { align-self: stretch; height: 24px; margin-top: 12px; padding: 0 7px; display: grid; grid-template-columns: 1fr auto 1fr; align-items: center; flex: none; }
.sheet-head svg:first-child { width: 20px; height: 22px; margin-left: -2px; }
.sheet-head svg:last-child { width: 16px; height: 16px; justify-self: end; margin-right: 2px; }
.sheet-head span { font-size: 16px; font-weight: 500; color: #e6e7e7; }
.amount { font-size: 24px; font-weight: 700; color: #eff0f0; margin-top: 47px; line-height: 28px; flex: none; }
.amount-sol { font-size: 14.500px; color: #9a9d9b; margin-top: 6px; line-height: 18px; letter-spacing: .2px; flex: none; }
.panel { align-self: stretch; height: 130px; box-sizing: border-box; background: #2a2b2b; border-radius: 14px; padding: 9px 16px; margin-top: 42px; flex: none; display: flex; flex-direction: column; justify-content: center; gap: 0; }
.row { display: flex; justify-content: space-between; align-items: center; height: 37.500px; font-size: 14.200px; color: #999d9b; }
.row b { font-weight: 400; color: #e4e5e5; letter-spacing: .2px; }
.row .done { color: #2aa876; letter-spacing: 0; }
.with-info { display: inline-flex; align-items: center; gap: 5px; }
.with-info svg { width: 14px; height: 14px; }
.blank { width: 122px; height: 14px; margin-right: -8px; margin-top: 1px; background: #fff; border: 1px solid #000; }
.fee { margin-top: 24px; height: 80px; padding-top: 0; justify-content: flex-start; }
.fee .row { margin-top: 14px; height: 48px; }
.fee-val { display: flex; flex-direction: column; align-items: flex-end; gap: 6px; }
.fee-val em { font-style: normal; font-size: 14px; color: #6b6f6d; }
.shade { position: absolute; right: 0; bottom: 0; width: 250px; height: 80px; border-radius: 0 0 18px 0; background: linear-gradient(160deg, rgba(14,22,20,0) 45%, rgba(14,22,20,.75) 100%); }
.photo-time { position: absolute; right: 13px; bottom: 8px; font-size: 19.500px; line-height: 24px; color: #fff; letter-spacing: -.5px; font-variant-numeric: tabular-nums; }
.forward { width: 52px; height: 52px; border-radius: 50%; background: #3c4241; margin-left: 14px; display: flex; align-items: center; justify-content: center; }
.forward svg { width: 26px; height: 22px; }

.long { width: 468px; height: 138px; margin-top: 24px; flex-direction: column; padding: 6px 16px 0; }
.long .time { align-self: flex-end; margin-top: -20px; display: inline-flex; align-items: center; gap: 5px; margin-right: -2px; }
.long .time svg { width: 26px; height: 18px; }
.wide { width: 443px; height: 88px; margin-top: 22px; flex-direction: column; padding: 7px 15px; }
.wide p { white-space: nowrap; }
.wide .time { align-self: flex-end; margin-top: 10px; margin-right: 1px; }
.thanks { width: 212px; height: 60px; margin-top: 22px; padding: 7px 16px; justify-content: space-between; }
.thanks .time { margin-top: 22px; margin-right: 29px; }
.last { width: 442px; height: 60px; margin-top: 22px; padding: 8px 15px; }
.last p { white-space: nowrap; }

.tail-in::after, .tail-out::after { content: ""; position: absolute; bottom: 0; width: 14px; height: 14px; background: inherit; }
.tail-in::after { left: -10px; clip-path: polygon(100% 0, 100% 100%, 0 100%, 30% 70%, 50% 30%); }
.tail-out::after { right: -11px; clip-path: polygon(0 0, 100% 100%, 0 100%); }
.photo.tail-in::after { left: -16px; bottom: -4px; background: #262828; }

.scrollbar { position: absolute; left: 631px; top: 773px; width: 4px; height: 177px; border-radius: 2px; background: #5a5c5c; }
.jump { position: absolute; left: 573px; top: 1007px; width: 52px; height: 52px; border-radius: 50%; background: #2b2b2b; display: flex; align-items: center; justify-content: center; }
.jump svg { width: 20px; height: 12px; }

.composer { height: 138px; flex: none; box-sizing: border-box; background: #121414; display: flex; align-items: flex-start; padding-top: 16px; position: relative; }
.plus { width: 34px; height: 34px; margin: 9px 0 0 21px; flex: none; }
.input { width: 409px; height: 53px; margin-left: 22px; border-radius: 26px; background: #2a2b2b; display: flex; align-items: center; justify-content: flex-end; padding-right: 20px; box-sizing: border-box; flex: none; }
.input svg { width: 30px; height: 32px; }
.camera { width: 38px; height: 32px; margin: 10px 0 0 30px; flex: none; }
.mic { width: 28px; height: 38px; margin: 8px 0 0 31px; flex: none; }
</style>
